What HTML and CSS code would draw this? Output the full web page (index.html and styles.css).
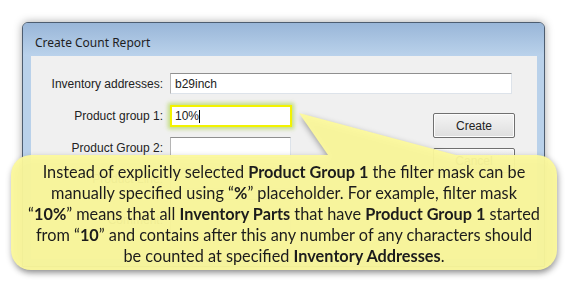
FILE: index.html
```html
<!DOCTYPE html>
<html lang="en">
  <head>
    <meta charset="UTF-8" />
    <title>Create Count Report</title>
    <link rel="stylesheet" href="styles.css">
  </head>
  <body>
    <div class="stage">
      <div class="window">
        <div class="titlebar">Create Count Report</div>
        <div class="client">
          <div class="field">
            <label>Inventory addresses:</label>
            <div class="box wide">b29inch</div>
          </div>
          <div class="lower">
            <div class="fields">
              <div class="field">
                <label>Product group 1:</label>
                <div class="box active">10%<span class="caret"></span></div>
              </div>
              <div class="field">
                <label>Product Group 2:</label>
                <div class="box"></div>
              </div>
              <div class="field">
                <label>Product Line:</label>
                <div class="box"></div>
              </div>
              <div class="field tall">
                <label>Comment:</label>
                <div class="box"></div>
              </div>
            </div>
            <div class="buttons">
              <button type="button">Create</button>
              <button type="button">Cancel</button>
            </div>
          </div>
        </div>
      </div>
    </div>

    <div class="callout">
      <svg class="tail" width="160" height="42" viewBox="0 0 160 42">
        <polygon points="0,0 29,42 157,42" />
      </svg>
      <p>
        Instead of explicitly selected <b>Product Group 1</b> the filter mask can be<br />
        manually specified using “<b>%</b>” placeholder. For example, filter mask<br />
        “<b>10%</b>” means that all <b>Inventory Parts</b> that have <b>Product Group 1</b> started<br />
        from “<b>10</b>” and contains after this any number of any characters should<br />
        be counted at specified <b>Inventory Addresses</b>.
      </p>
    </div>
  </body>
</html>
```

FILE: styles.css
```css
html {
  height: 100%;
}

body {
  margin: 0;
  width: 568px;
  height: 283px;
  overflow: hidden;
  position: relative;
  background: #fff;
}

.stage {
  padding: 22px 0 0 22px;
}

.window {
  width: 523px;
  height: 245px;
  box-sizing: border-box;
  display: flex;
  flex-direction: column;
  padding: 0 7px 7px 8px;
  background: #b9d1ea;
  border: 1px solid #4d5d70;
  border-radius: 6px 6px 0 0;
  box-shadow: 0 0 8px rgba(0, 0, 0, 0.35);
}

.titlebar {
  height: 33px;
  margin: 0 -7px 0 -8px;
  padding: 0 0 5px 12px;
  box-sizing: border-box;
  display: flex;
  align-items: flex-end;
  background: linear-gradient(#99b6d8, #bad2eb);
  border-radius: 5px 5px 0 0;
  font-family: "Noto Sans", sans-serif;
  font-size: 12px;
  color: #1e1e1e;
}

.client {
  flex: 1;
  padding: 17px 0 0 0;
  background: #f0f0f0;
  font-family: "Liberation Sans", Arial, sans-serif;
  font-size: 12px;
  color: #222;
}

.field {
  display: flex;
  align-items: center;
  height: 21px;
}

.field label {
  width: 132px;
  margin-right: 7px;
  text-align: right;
  white-space: nowrap;
}

.box {
  width: 121px;
  height: 21px;
  box-sizing: border-box;
  padding: 0 4px;
  display: flex;
  align-items: center;
  background: #fff;
  border: 1px solid #dde3ea;
  border-top-color: #8f8f8f;
  border-left-color: #b5b5b5;
}

.box.wide {
  width: 342px;
}

.box.active {
  width: 122px;
  height: 22px;
  padding-left: 3px;
  border: 2px solid #f2f200;
  box-shadow: 0 0 4px 2px rgba(180, 215, 90, 0.75);
}

.caret {
  width: 1px;
  height: 13px;
  background: #000;
}

.lower {
  display: flex;
  margin-top: 11px;
}

.fields {
  display: flex;
  flex-direction: column;
  gap: 10px;
}

.fields .field:first-child {
  height: 22px;
}

.field.tall {
  height: 42px;
}

.field.tall .box {
  height: 42px;
}

.buttons {
  margin-left: auto;
  margin-right: 22px;
  padding-top: 8px;
  display: flex;
  flex-direction: column;
  gap: 10px;
}

.buttons button {
  width: 82px;
  height: 25px;
  font-family: "Liberation Sans", Arial, sans-serif;
  font-size: 12px;
  color: #222;
  background: linear-gradient(#f4f4f4, #dedede);
  border: 1px solid #707070;
  border-radius: 2px;
  box-shadow: inset 0 0 0 1px #fcfcfc;
}

.callout {
  position: absolute;
  left: 11px;
  top: 155px;
  width: 546px;
  height: 115px;
  box-sizing: border-box;
  padding-top: 6px;
  border-radius: 20px;
  background: rgba(252, 249, 156, 0.95);
  filter: drop-shadow(1px 3px 3px rgba(0, 0, 0, 0.4));
}

.callout .tail {
  position: absolute;
  left: 288px;
  top: -42px;
  display: block;
}

.callout .tail polygon {
  fill: rgba(252, 249, 156, 0.95);
}

.callout p {
  margin: 0;
  font-family: Lato, "Open Sans", sans-serif;
  font-size: 16.3px;
  line-height: 21px;
  color: #1c1c1c;
  text-align: center;
  white-space: nowrap;
}

.callout b {
  font-weight: 700;
}
```
